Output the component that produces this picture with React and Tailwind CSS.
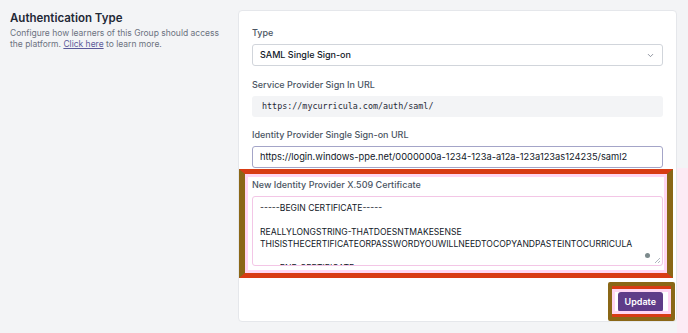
import { ChevronDown } from "lucide-react";

const sans = { fontFamily: '"Inter", "Liberation Sans", sans-serif' };

const Label = ({ children }) => (
  <p className="text-[9px] leading-[12px] font-medium text-[#4b5563]">{children}</p>
);

export default function App() {
  return (
    <div
      className="relative flex h-[333px] w-[688px] overflow-hidden bg-[#f3f4f6]"
      style={sans}
    >
      {/* Left */}
      <div className="w-[238px] shrink-0 pl-[10px] pt-[11px]">
        <h2 className="text-[11.5px] leading-[15px] font-semibold text-[#1f2937]">
          Authentication Type
        </h2>
        <p className="mt-[2px] w-[222px] text-[8.5px] leading-[11px] text-[#6b7280]">
          Configure how learners of this Group should access the platform.{" "}
          <span className="text-[#5c5a9a] underline">Click here</span> to learn more.
        </p>
      </div>

      {/* Card */}
      <div className="mt-[10px] flex h-[312px] w-[439px] shrink-0 flex-col rounded-[4px] border border-[#e5e7eb] bg-white px-[13px] pt-[16px]">
        <Label>Type</Label>
        <div className="mt-[5px] flex h-[22px] items-center justify-between rounded-[3px] border border-[#d1d5db] pl-[7px] pr-[7px]">
          <span className="text-[9px] font-medium text-[#111827]">SAML Single Sign-on</span>
          <ChevronDown size={9} className="text-[#6b7280]" />
        </div>

        <div className="mt-[13px]">
          <Label>Service Provider Sign In URL</Label>
        </div>
        <div className="mt-[5px] flex h-[21px] items-center rounded-[3px] bg-[#f3f4f6] pl-[10px]">
          <span
            className="text-[8.4px] font-medium text-[#1f2937]"
            style={{ fontFamily: '"DejaVu Sans Mono", "Liberation Mono", monospace' }}
          >
            https://mycurricula.com/auth/saml/
          </span>
        </div>

        <div className="mt-[12px]">
          <Label>Identity Provider Single Sign-on URL</Label>
        </div>
        <div className="mt-[5px] flex h-[22px] items-center rounded-[3px] border-[1.5px] border-[#a4a5c8] pl-[7px]">
          <span className="text-[9.3px] text-[#111827]">
            https://login.windows-ppe.net/0000000a-1234-123a-a12a-123a123as124235/saml2
          </span>
        </div>

        <div className="mt-[11px]">
          <Label>New Identity Provider X.509 Certificate</Label>
        </div>
        <div className="relative mt-[5px] h-[70px] overflow-hidden rounded-[3px] border border-[#f3c6e6] pl-[7px] pt-[5px] text-[8.6px] leading-[12px] text-[#111827]">
          <p>-----BEGIN CERTIFICATE-----</p>
          <p>&nbsp;</p>
          <p>REALLYLONGSTRING-THATDOESNTMAKESENSE</p>
          <p>THISISTHECERTIFICATEORPASSWORDYOUWILLNEEDTOCOPYANDPASTEINTOCURRICULA</p>
          <p>&nbsp;</p>
          <p>-----END CERTIFICATE-----</p>
          <span className="absolute right-[12px] top-[56px] h-[5px] w-[5px] rounded-full bg-[#7c8a8c]" />
          <svg className="absolute bottom-[1px] right-[1px]" width="7" height="7" viewBox="0 0 7 7">
            <path d="M6 1 L1 6 M6 4 L4 6" stroke="#9ca3af" strokeWidth="0.8" />
          </svg>
        </div>

        <div className="mt-[26px] flex justify-end">
          <button className="h-[20px] rounded-[3px] bg-[#5f3c88] px-[7px] text-[9px] font-semibold text-white">
            Update
          </button>
        </div>
      </div>

      {/* annotation tint */}
      <div className="pointer-events-none absolute left-[677px] top-[168px] h-[165px] w-[11px] bg-[#fcebf5]" />

      {/* annotation around certificate */}
      <div className="pointer-events-none absolute left-[239px] top-[169px] h-[109px] w-[434px] border-x-[6px] border-y-[5px] border-x-[#8a6716] border-y-[#d83c14]">
        <div className="h-full w-full border-[3px] border-[#ffd6f2]" />
      </div>

      {/* annotation around button */}
      <div className="pointer-events-none absolute left-[608px] top-[282px] h-[39px] w-[67px] rounded-[2px] border-[4px] border-[#8a6716]">
        <div className="h-full w-full border-y-[3px] border-y-[#d83c14]">
          <div className="h-full w-full border-[3px] border-[#ffd6f2]" />
        </div>
      </div>
    </div>
  );
}
